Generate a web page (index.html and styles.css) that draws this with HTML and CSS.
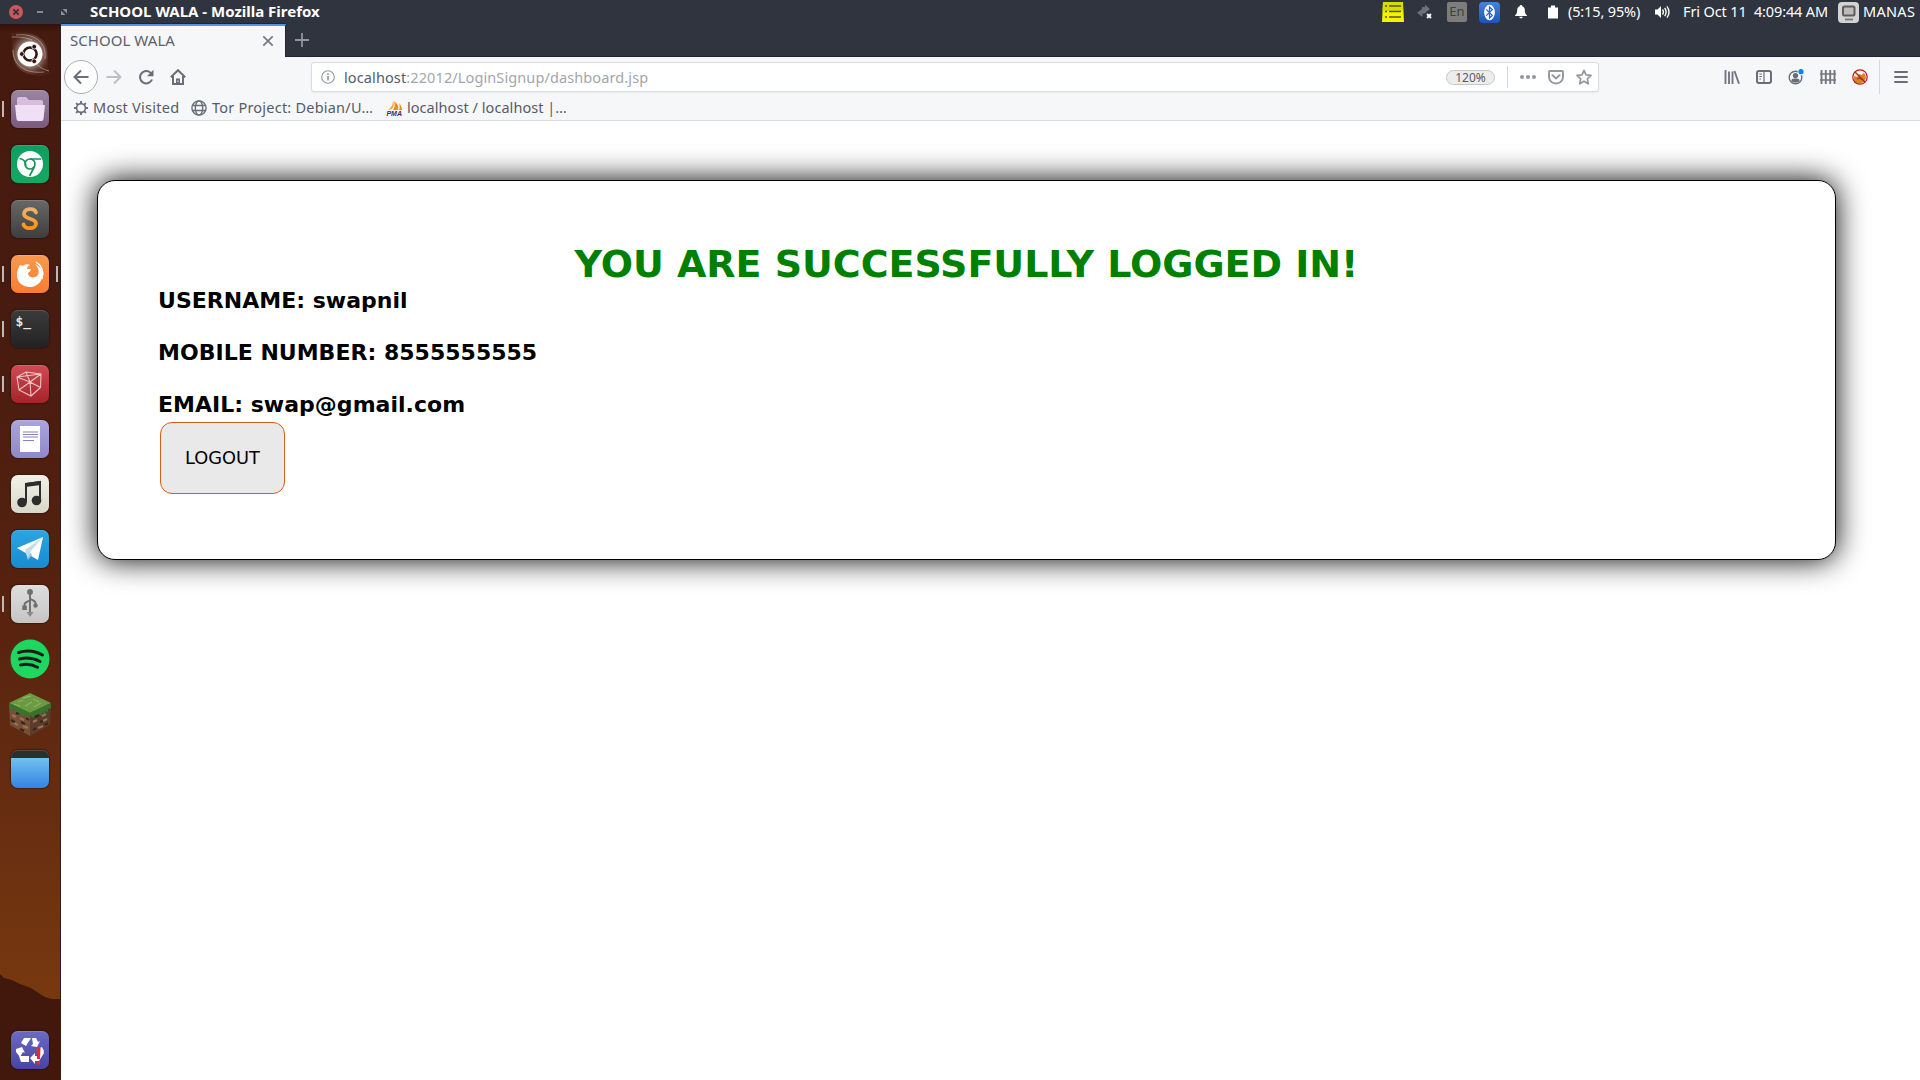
FILE: index.html
```html
<!DOCTYPE html>
<html lang="en">
<head>
<meta charset="utf-8">
<title>SCHOOL WALA</title>
<link rel="stylesheet" href="styles.css">
</head>
<body>
<header class="panel">
  <div class="window-controls">
    <svg width="70" height="24" viewBox="0 0 70 24"><circle cx="16" cy="12" r="7" fill="#cc575d"/><path d="M13.3 9.3l5.4 5.4M18.7 9.3l-5.4 5.4" stroke="#2f343f" stroke-width="1.9"/><path d="M37 12h6" stroke="#8f949f" stroke-width="1.8"/><path d="M62.500 9h4.500v4.500zM61 10.500v4.500h4.500z" fill="#8a8f99"/></svg>
  </div>
  <span class="panel-title">SCHOOL WALA - Mozilla Firefox</span>
  <div class="indicators">
    <svg class="ind-list" width="22" height="22" viewBox="0 0 22 22"><path d="M1 1h20l1 20H0z" fill="#f4f400"/><path d="M1 1h20v9H.6z" fill="#d9dc00"/><path d="M3 5h2M7 5h12M3 10.500h2M7 10.500h12M3 16h2M7 16h12" stroke="#55570d" stroke-width="1.7"/></svg>
    <svg class="ind-sync" width="16" height="16" viewBox="0 0 16 16"><path d="M5 3h3V.5L13 5 8 9V7H5zM8 7v2.500H5.500V13L0 8.800 5 5v2z" fill="#6d7078"/><path d="M10 10l4 4M14 10l-4 4" stroke="#fff" stroke-width="1.900"/></svg>
    <span class="ind-lang">En</span>
    <svg class="ind-bt" width="21" height="21" viewBox="0 0 21 21"><defs><linearGradient id="bt" x2="0" y2="1"><stop stop-color="#4484df"/><stop offset="1" stop-color="#1b55b8"/></linearGradient></defs><rect width="21" height="21" rx="4" fill="url(#bt)"/><ellipse cx="10.500" cy="10.500" rx="5.300" ry="7.800" fill="#fff"/><path d="M7.300 7.400l6 6-2.800 2.600V5l2.800 2.600-6 6" fill="none" stroke="#2865c7" stroke-width="1.300"/></svg>
    <svg class="ind-bell" width="12" height="14" viewBox="0 0 12 14"><path d="M6 0c.8 0 1.200.5 1.200 1.200C9 1.800 9.800 3.300 9.800 5c0 3 .7 4 2.200 5.500V11H0v-.5C1.500 9 2.200 8 2.200 5c0-1.700.8-3.200 2.600-3.800C4.800.5 5.200 0 6 0zM4.400 11.800h3.200c0 1-.7 1.700-1.600 1.700s-1.600-.7-1.600-1.700z" fill="#fff"/></svg>
    <svg class="ind-bat" width="10" height="14" viewBox="0 0 10 14"><path d="M3 .5h4v2h3v11H0v-11h3z" fill="#fff"/></svg>
    <span class="battery-text">(5:15, 95%)</span>
    <svg class="ind-vol" width="15" height="14" viewBox="0 0 15 14"><path d="M0 4.500h2.500L6 1v12L2.500 9.500H0z" fill="#fff"/><path d="M7.500 4.500q1.700 2.500 0 5M9.700 2.800q2.800 4.200 0 8.400M12 1.300q4 5.700 0 11.400" fill="none" stroke="#fff" stroke-width="1.400"/></svg>
    <span class="date-text">Fri Oct 11&nbsp; 4:09:44 AM</span>
    <svg class="ind-user" width="21" height="21" viewBox="0 0 21 21"><rect width="21" height="21" rx="4" fill="#d3d3d3"/><rect x="5" y="4.500" width="11.500" height="9" rx="1.500" fill="#bbb" stroke="#5c5c5c" stroke-width="2"/><path d="M7 17.500h8" stroke="#777" stroke-width="1.800"/></svg>
    <span class="user-text">MANAS</span>
  </div>
</header>
<div class="desktop">
  <nav class="launcher">
    <div class="item home"><svg width="44" height="44" viewBox="0 0 44 44"><defs><radialGradient id="sw"><stop offset=".5" stop-color="#b9a29a" stop-opacity=".9"/><stop offset="1" stop-color="#7b564a" stop-opacity=".15"/></radialGradient></defs><path d="M2 2c12-5 34 0 37 14 2 10-1 18 3 26-12 4-32 1-36-13C3 19 6 10 2 2z" fill="url(#sw)"/><path d="M8 3c17-2 31 6 29 24M5 18c0 15 12 24 31 22M4 5c7 0 13 0 20 3M41 39c-7-2-10-4-13-8" fill="none" stroke="#d6c6c0" stroke-width=".9" opacity=".6"/><circle cx="22" cy="22" r="12.500" fill="#fff"/><circle cx="22" cy="22" r="6.600" fill="none" stroke="#32150f" stroke-width="2.500"/><g fill="#32150f" stroke="#fff" stroke-width=".8"><circle cx="13.800" cy="22" r="2.400"/><circle cx="26.200" cy="14.700" r="2.400"/><circle cx="26.200" cy="29.300" r="2.400"/></g></svg></div>
    <div class="item running"><div class="tile files"><svg width="38" height="38" viewBox="0 0 38 38"><path d="M6 9q0-2 2-2h7l3 3h12q2 0 2 2v7H6z" fill="#d7bede"/><path d="M4 15h30l-1.500 14q-.2 2-2 2h-23q-1.800 0-2-2z" fill="#f0e0f5"/></svg></div></div>
    <div class="item"><div class="tile chrome"><svg width="38" height="38" viewBox="0 0 38 38"><circle cx="19" cy="19" r="13" fill="#fff"/><g fill="none" stroke="#18955b" stroke-width="1.700"><circle cx="19" cy="19" r="5"/><path d="M8.500 13.500c5 1 6 3 6.300 7.300M18.500 14h11.500M23.500 21.500l-5 9.500"/></g></svg></div></div>
    <div class="item"><div class="tile sublime"><svg width="38" height="38" viewBox="0 0 38 38"><defs><linearGradient id="sb" x2="0" y2="1"><stop stop-color="#e9b468"/><stop offset="1" stop-color="#ff9510"/></linearGradient></defs><path d="M25 12.500c-1.500-5-12-4.500-12 1.500 0 6 12 3.500 12 9.500 0 6-11 6-12.500 1" fill="none" stroke="url(#sb)" stroke-width="3.800" stroke-linecap="round"/></svg></div></div>
    <div class="item running active"><div class="tile firefox"><svg width="38" height="38" viewBox="0 0 38 38"><path d="M8 12l1-2 3 1c2-2 5-2 7-1-2 1-3 2-3 4h4c0 2-2 3-3 4 0 4 5 6 9 3 3-3 2-8-2-12 5 3 6 4 7 8 2 8-4 15-12 15S5 26 6 19c0-3 1-5 2-7z" fill="#fff"/><path d="M25 7c6 4 8 9 6 17M28 9c3 4 4 7 4 11" fill="none" stroke="#fff" stroke-width="1.300"/></svg></div></div>
    <div class="item running"><div class="tile terminal"><span class="prompt">$_</span></div></div>
    <div class="item running"><div class="tile ruby"><svg width="38" height="38" viewBox="0 0 38 38"><path d="M15 7l15 2-.5 13.500L20 31 8 25 6 12zM6 12l24-3M6 12l13 5L30 9M19 17l1 14M19 17L8 25M15 7l4 10 10.500 5.500M8 25l22-16" fill="none" stroke="#f0c3c3" stroke-width="1.100"/></svg></div></div>
    <div class="item"><div class="tile document"><svg width="38" height="38" viewBox="0 0 38 38"><path d="M9 6h20v26H9z" fill="#fff"/><path d="M12 12h15M12 14.500h15M12 17h15M12 20.500h11" stroke="#8580b5" stroke-width="1.100"/></svg></div></div>
    <div class="item"><div class="tile music"><svg width="38" height="38" viewBox="0 0 38 38"><path d="M15 27V9l14-2v18" fill="none" stroke="#2e2d2d" stroke-width="2"/><path d="M14 8l16-2v4l-16 2z" fill="#2e2d2d"/><circle cx="11" cy="27.500" r="4.800" fill="#2e2d2d"/><circle cx="25.500" cy="25.500" r="4.800" fill="#2e2d2d"/></svg></div></div>
    <div class="item"><div class="tile telegram"><svg width="38" height="38" viewBox="0 0 38 38"><path d="M6 18L32 7 27 30z" fill="#fff"/><path d="M14 20l18-13-13 15-2 8z" fill="#c3ddec"/><path d="M19 22l-2 8 4-5z" fill="#98c3dc"/></svg></div></div>
    <div class="item running"><div class="tile usb"><svg width="38" height="38" viewBox="0 0 38 38"><path d="M19 8v20M13.500 22v-2.500q0-2 5.500-4M24.500 20v-2q0-2-5.500-4" fill="none" stroke="#6e6e6e" stroke-width="1.900"/><circle cx="19" cy="7" r="2.900" fill="#6e6e6e"/><path d="M15.500 27h7L19 32z" fill="#8a8a8a"/><path d="M11.300 20.500h4.500V25h-4.500z" fill="#6e6e6e"/><circle cx="24.500" cy="20.500" r="2.200" fill="#6e6e6e"/></svg></div></div>
    <div class="item"><svg width="40" height="40" viewBox="0 0 40 40"><circle cx="20" cy="20" r="19.500" fill="#1ed760"/><path d="M8.500 13.500c8-2.500 17-1.500 24 2.500M9.500 20c7-2 14-1 20.500 2.500M10.500 26c6-1.500 12-.5 17 2.200" fill="none" stroke="#151c17" stroke-width="3" stroke-linecap="round"/></svg></div>
    <div class="item"><svg width="42" height="44" viewBox="0 0 42 44"><path d="M0 11l21 10v23L1 33z" fill="#755037"/><path d="M42 11L21 21v23l20-11z" fill="#5b3b29"/><path d="M21 1l21 10-21 10L0 11z" fill="#6c9a43"/><path d="M0 11l21 10 21-10v5l-3 1v3l-3-1v3l-3-2v4l-3-2-2 3-2-2-2 3-3-3-3 3-3-4-2 2-3-4-2 2-3-5-3 1-3-3z" fill="#36742d"/><path d="M9 10l5-2M16 14l7-4M24 7l6 3M14 6l8-2M25 15l7-4M5 12l6 2" stroke="#8ab55b" stroke-width="1.300"/><path d="M3 23l4 2M11 26l4 2M5 31l4 2M14 34l5 2M24 30l4-2M33 24l4-2M29 36l5-2M34 29l4-2" stroke="#9a7354" stroke-width="2"/><path d="M7 21l3 1M2 28l4 2M12 30l4 2M17 26l3 2M11 37l4 2M26 25l4-2M31 30l3-1M24 38l3-2M36 33l3-2" stroke="#392319" stroke-width="2"/></svg></div>
    <div class="item"><div class="tile window"></div></div>
    <div class="item trash"><div class="tile bin"><svg width="38" height="38" viewBox="0 0 38 38"><g fill="#fff"><path d="M13 7h7l-5 8-5-3zM21 7h4l2 4 2-1-3 6-6-1 2-2zM5 18l6-2 3 6-2-1-3 5-4-5zM8 25h10v6h-8zM19 27l5-5v3h4l4-6 1 3-5 8h-4v3zM27 18l4-2 2 4-4 3z"/></g><path d="M25.500 17h4l-.5 11h-3zM25.500 30h3.500v3.500h-3.500z" fill="#ee2630"/></svg></div></div>
    <svg class="hill" width="61" height="107" viewBox="0 0 61 107"><path d="M0 1l4 4 8 2 8 4 11 4 6 4 8 5 7 2h9v81H0z" fill="#42180d"/></svg>
  </nav>
  <main class="browser">
    <div class="tabstrip">
      <div class="tab"><span class="tab-title">SCHOOL WALA</span><svg width="12" height="12" viewBox="0 0 12 12"><path d="M1.300 1.300l9.400 9.400M10.700 1.300L1.300 10.700" stroke="#737881" stroke-width="1.700"/></svg></div>
      <svg class="new-tab" width="14" height="14" viewBox="0 0 14 14"><path d="M7 0v14M0 7h14" stroke="#8f949d" stroke-width="1.800"/></svg>
    </div>
    <div class="toolbar">
      <span class="back"><svg width="16" height="16" viewBox="0 0 16 16"><path d="M15.500 8H1.800M8 1.500L1.500 8 8 14.500" fill="none" stroke="#696e78" stroke-width="2"/></svg></span>
      <svg class="forward" width="16" height="16" viewBox="0 0 16 16"><path d="M.5 8h13.700M8 1.500L14.500 8 8 14.500" fill="none" stroke="#bec0c5" stroke-width="2"/></svg>
      <svg class="reload" width="16" height="16" viewBox="0 0 16 16"><path d="M14 10.500A6.200 6.200 0 1 1 12.500 3.700L14 5.200" fill="none" stroke="#696e78" stroke-width="2"/><path d="M15.500.8v6.400H9z" fill="#696e78"/></svg>
      <svg class="home-icon" width="16" height="16" viewBox="0 0 16 16"><path d="M.8 8.200L8 1.200l7.200 7M3 7v8h10V7" fill="none" stroke="#696e78" stroke-width="2"/><path d="M6 9.500h4V15H6z" fill="#696e78"/><path d="M7.500 11.500h1V13h-1z" fill="#fff"/></svg>
      <div class="urlbar">
        <svg width="14" height="14" viewBox="0 0 14 14"><circle cx="7" cy="7" r="6.300" fill="none" stroke="#9598a0" stroke-width="1.100"/><path d="M7 6v4.500M7 3.300v1.600" stroke="#888c94" stroke-width="1.500"/></svg>
        <span class="url"><b>localhost</b>:22012/LoginSignup/dashboard.jsp</span>
        <span class="zoom-level">120%</span>
        <span class="url-sep"></span>
        <svg class="dots" width="16" height="16" viewBox="0 0 16 16"><g fill="#94979f"><circle cx="2" cy="8" r="2"/><circle cx="8" cy="8" r="2"/><circle cx="14" cy="8" r="2"/></g></svg>
        <svg class="pocket" width="16" height="16" viewBox="0 0 16 16"><path d="M1.800 2h12.400q.8 0 .8.800V8a7 6.500 0 0 1-14 0V2.800Q1 2 1.800 2z" fill="none" stroke="#94979f" stroke-width="1.900"/><path d="M4.500 6.300L8 9.500l3.500-3.200" fill="none" stroke="#94979f" stroke-width="1.900" stroke-linecap="round"/></svg>
        <svg class="star" width="16" height="16" viewBox="0 0 16 16"><path d="M8 1.300l2 4.600 5 .5-3.700 3.400 1 5L8 12.200l-4.300 2.600 1-5L1 6.400l5-.5z" fill="none" stroke="#94979f" stroke-width="1.700" stroke-linejoin="round"/></svg>
      </div>
      <div class="tools">
        <svg width="16" height="16" viewBox="0 0 16 16"><path d="M1.500 1v14M5 2.500V15M8.500 2.500V15M10.500 2l4.500 12.800" fill="none" stroke="#737680" stroke-width="1.900"/></svg>
        <svg width="16" height="16" viewBox="0 0 16 16"><rect x="1" y="2" width="14" height="12" rx="2" fill="none" stroke="#696e78" stroke-width="2"/><path d="M8 2v12M3.300 5H6M3.300 7.500H6M3.300 10H5" stroke="#696e78" stroke-width="1.200"/></svg>
        <svg width="16" height="16" viewBox="0 0 16 16"><circle cx="7.500" cy="8.500" r="6.300" fill="none" stroke="#696e78" stroke-width="1.400"/><circle cx="7.500" cy="6.600" r="2.700" fill="#696e78"/><path d="M3.300 12c.3-2.400 2.400-2.400 4.200-2.400s3.900 0 4.200 2.400c-2 2.200-6.400 2.200-8.400 0z" fill="#696e78"/><circle cx="13" cy="3" r="3.400" fill="#f6f7f9"/><circle cx="13" cy="2.700" r="2.600" fill="#0a84ff"/></svg>
        <svg width="16" height="16" viewBox="0 0 16 16"><path d="M1.500 1v14M5.800 1v14M10.200 1v14M14.500 1v14" stroke="#74787f" stroke-width="1.900"/><path d="M0 5h16M0 11h16" stroke="#74787f" stroke-width="1.500"/></svg>
        <svg width="16" height="16" viewBox="0 0 16 16"><path d="M2 7l3 1 2-3 3 1 1-2 2 1 1 4-2 4-5 2-5-1z" fill="#da8420"/><path d="M5 10q3-2 5 1" fill="none" stroke="#875023" stroke-width="1.400"/><circle cx="8" cy="8" r="7.200" fill="none" stroke="#cf1116" stroke-width="1.200"/><path d="M3 3l10 10" stroke="#bd1a1a" stroke-width="1.200"/></svg>
      </div>
      <span class="tool-sep"></span>
      <svg class="menu" width="14" height="12" viewBox="0 0 14 12"><path d="M1 1h12M1 6h12M1 11h12" stroke="#696e78" stroke-width="1.900" stroke-linecap="round"/></svg>
    </div>
    <div class="bookmarks">
      <svg class="bm-gear" width="16" height="16" viewBox="0 0 16 16"><circle cx="8" cy="8" r="4.400" fill="none" stroke="#696e78" stroke-width="1.600"/><path d="M8 1v3M8 12v3M1 8h3M12 8h3M3.100 3.100l2 2M10.900 10.900l2 2M12.900 3.100l-2 2M5.100 10.900l-2 2" stroke="#696e78" stroke-width="1.900"/></svg>
      <span class="bm-visited">Most Visited</span>
      <svg class="bm-globe" width="16" height="16" viewBox="0 0 16 16"><g fill="none" stroke="#696e78" stroke-width="1.400"><circle cx="8" cy="8" r="7.100"/><ellipse cx="8" cy="8" rx="3.700" ry="7.100"/><path d="M1.500 5.500h13M1.500 10.500h13"/></g></svg>
      <span class="bm-tor">Tor Project: Debian/U…</span>
      <svg class="bm-pma" width="17" height="18" viewBox="0 0 17 18"><path d="M7 1c1 4 1 6-1 9l-4 1C6 8 7 5 7 1z" fill="#f7a43a"/><path d="M8 2c4 3 5 6 4 9H7c2-3 2-6 1-9zM13 4c2 2 3 5 3 7h-3c1-2 1-4 0-7z" fill="#f58d12"/><text x="8.200" y="16.500" class="pma-text">PMA</text></svg>
      <span class="bm-local">localhost / localhost |…</span>
    </div>
    <section class="page">
      <div class="card">
        <h1>YOU ARE SUCCESSFULLY LOGGED IN!</h1>
        <h3>USERNAME: swapnil</h3>
        <h3>MOBILE NUMBER: 8555555555</h3>
        <h3>EMAIL: swap@gmail.com</h3>
        <button class="logout">LOGOUT</button>
      </div>
    </section>
  </main>
</div>
</body>
</html>
```
FILE: styles.css
```css
* { box-sizing: border-box; }
body {
  margin: 0;
  height: 1080px;
  overflow: hidden;
  display: flex;
  flex-direction: column;
  font-family: "Noto Sans", sans-serif;
  font-size: 14.5px;
  background: #fff;
}
svg { display: block; flex: none; }
span { white-space: nowrap; }

.panel {
  height: 24px;
  flex: none;
  display: flex;
  align-items: center;
  background: #2f343f;
  color: #fff;
}
.panel-title { margin-left: 20px; padding-bottom: 2px; font-size: 15px; font-weight: 700; }
.indicators { margin-left: auto; display: flex; align-items: center; }
.ind-sync { margin: 0 14px 0 13px; }
.ind-lang {
  width: 20px;
  height: 20px;
  margin-right: 12px;
  border-radius: 2px;
  background: #7d7d7d;
  color: #3f4042;
  font-size: 13px;
  line-height: 18px;
  text-align: center;
}
.ind-bell { margin: 0 21px 0 15px; }
.battery-text { width: 73px; margin: 0 14px 0 10px; padding-bottom: 2px; letter-spacing: -0.14px; }
.date-text { width: 146px; margin: 0 9px 0 13px; padding-bottom: 2px; letter-spacing: -0.13px; }
.user-text { width: 57px; margin-left: 4px; padding-bottom: 2px; letter-spacing: 0.3px; }

.desktop { flex: 1; display: flex; min-height: 0; }
.launcher {
  position: relative;
  width: 61px;
  flex: none;
  display: flex;
  flex-direction: column;
  padding: 2.5px 1px 2.5px 0;
  border-right: 1px solid #2b1c20;
  background: linear-gradient(#32120c, #451a0f 8px, #481b10 300px, #58230f 600px, #682e11 800px, #78390f 980px);
}
.item {
  position: relative;
  z-index: 1;
  height: 55px;
  flex: none;
  display: flex;
  align-items: center;
  justify-content: center;
}
.item.running::before,
.item.active::after {
  content: "";
  position: absolute;
  left: 2px;
  top: 19px;
  width: 2px;
  height: 16px;
  background: #c3b8b4;
}
.item.active::after { left: auto; right: 1px; }
.trash { margin-top: auto; }
.hill { position: absolute; left: 0; bottom: 0; }
.tile {
  width: 38px;
  height: 38px;
  border-radius: 7px;
  overflow: hidden;
  box-shadow: 0 0 1px 1px rgba(20, 10, 8, 0.35), inset 0 1px 0 rgba(255, 255, 255, 0.15);
}
.files { background: linear-gradient(#9c86a2, #7a5a80); }
.chrome { background: linear-gradient(#0e9f5e, #17a765); }
.sublime { background: linear-gradient(#686868, #3e3e3e); }
.firefox { background: linear-gradient(#f89a4e, #f97c33); }
.terminal { background: linear-gradient(#3b3b3b, #222); }
.ruby { background: linear-gradient(#d04a54, #a5232a); }
.document { background: linear-gradient(#aaa5dc, #8f88cb); }
.music { background: linear-gradient(#f2f1e7, #d8d8c9); }
.telegram { background: linear-gradient(#2da5e0, #178bd0); }
.usb { background: linear-gradient(#dedede, #c5c5c5); }
.window { background: linear-gradient(#2c2d2f 8px, #71c1ee 8px, #3383e4); }
.bin { background: linear-gradient(#6a6bc4, #4644a5); }
.prompt {
  display: block;
  padding: 4px 0 0 5px;
  color: #e8e8e8;
  font: bold 13px/15px "DejaVu Sans Mono", monospace;
}

.browser { flex: 1; min-width: 0; display: flex; flex-direction: column; color: #565b66; }
.tabstrip {
  height: 33px;
  flex: none;
  display: flex;
  align-items: center;
  border-bottom: 1px solid #22242f;
  background: #2f343f;
}
.tab {
  width: 225px;
  height: 33px;
  margin-bottom: -1px;
  padding: 0 11px 2px 9px;
  display: flex;
  align-items: center;
  justify-content: space-between;
  border-top: 2px solid #5294e2;
  border-right: 1px solid #22242f;
  box-shadow: 0 -1px 0 #22242f;
  background: #f6f7f9;
  color: #5c616c;
}
.tab-title { padding-bottom: 1px; font-size: 15px; letter-spacing: 0.05px; }
.new-tab { margin-left: 9px; }
.toolbar { height: 41px; flex: none; padding-bottom: 1px; display: flex; align-items: center; background: #f6f7f9; }
.back {
  width: 34px;
  height: 34px;
  margin-left: 3px;
  display: flex;
  align-items: center;
  justify-content: center;
  border: 1px solid #adafb4;
  border-radius: 50%;
  background: #fdfdfe;
}
.forward { margin-left: 8px; }
.reload, .home-icon { margin-left: 16px; }
.urlbar {
  width: 1288px;
  height: 30px;
  margin-left: 125px;
  padding: 0 6px 0 9px;
  display: flex;
  align-items: center;
  border: 1px solid #d8dbe0;
  border-radius: 3px;
  background: #fff;
  box-shadow: 0 1px 2px rgba(0, 0, 0, 0.06);
}
.url { margin-left: 9px; padding-bottom: 1px; color: #a3a6ac; letter-spacing: 0.11px; }
.url b { font-weight: 400; color: #565b66; }
.zoom-level {
  width: 49px;
  height: 15px;
  margin-left: auto;
  border: 1px solid #c5c7ca;
  border-radius: 8px;
  background: #ededee;
  font-size: 12px;
  line-height: 13px;
  text-align: center;
}
.url-sep { width: 1px; height: 22px; margin-left: 12px; background: #d5d8dc; }
.dots, .pocket, .star { margin-left: 12px; }
.tools { margin-left: 125px; display: flex; gap: 16px; }
.tool-sep { width: 1px; height: 34px; margin-left: 11px; background: #d5d8dc; }
.menu { margin-left: 14px; }

.bookmarks {
  height: 23px;
  flex: none;
  padding: 0 0 3px 12px;
  display: flex;
  align-items: center;
  border-bottom: 1px solid #d9dce1;
  background: #f6f7f9;
}
.bookmarks span { line-height: 19px; padding-bottom: 1px; }
.bm-visited { width: 87px; margin-left: 4px; letter-spacing: 0.25px; }
.bm-globe { margin-left: 11px; }
.bm-tor { width: 162px; margin-left: 5px; letter-spacing: 0.22px; }
.bm-pma { margin-left: 12px; overflow: visible; }
.bm-local { margin-left: 4px; letter-spacing: 0.05px; }
.pma-text { font: italic bold 7px "Liberation Sans", sans-serif; fill: #33345c; text-anchor: middle; }

.page { flex: 1; padding: 59px 84px 0 36px; background: #fff; font-family: "DejaVu Sans", sans-serif; color: #000; }
.card {
  height: 380px;
  padding: 61px 60px 59px;
  border: 1px solid #000;
  border-radius: 18px;
  background: #fff;
  box-shadow: 0 0 30px #000;
}
.card h1 { margin: 0 0 1px; font-size: 38px; line-height: 45px; letter-spacing: -0.04px; text-align: center; color: #008000; }
.card h3 { margin: 0 0 26px; font-size: 22px; line-height: 26px; letter-spacing: 0.02px; }
.logout {
  width: 125px;
  height: 72px;
  margin: -22px 0 0 2px;
  padding: 0 0 2px;
  display: block;
  border: 1px solid #d35f1b;
  border-radius: 12px;
  background: #e9e9e9;
  color: #000;
  font: 17.8px "DejaVu Sans", sans-serif;
}
```
